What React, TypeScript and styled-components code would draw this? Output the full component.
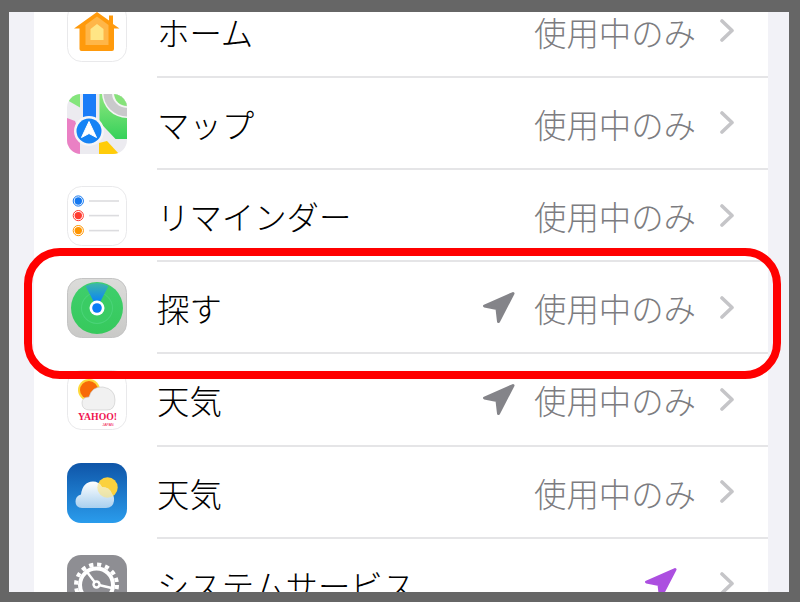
import React from "react";
import styled, { createGlobalStyle } from "styled-components";

const Global = createGlobalStyle`
  html, body { margin: 0; padding: 0; background: #666666; }
  body { font-family: "Noto Sans CJK JP", "Liberation Sans", sans-serif; }
`;

const Frame = styled.div`
  width: 800px;
  height: 602px;
  box-sizing: border-box;
  padding: 12px 11px 10px 9px;
  background: #666666;
`;

const Screen = styled.div`
  position: relative;
  height: 100%;
  overflow: hidden;
  background: #f2f2f7;
  padding: 0 21px 0 25px;
`;

const List = styled.ul`
  list-style: none;
  margin: -26.4px 0 0;
  padding: 0;
  background: #ffffff;
`;

const Row = styled.li`
  display: flex;
  align-items: center;
  height: 92.2px;
  padding-left: 33px;
`;

const AppIcon = styled.svg`
  flex: none;
  width: 60px;
  height: 60px;
  display: block;
`;

const RowBody = styled.div`
  flex: 1;
  align-self: stretch;
  min-width: 0;
  margin-left: 30px;
  padding-right: 33px;
  display: flex;
  align-items: center;
  border-bottom: 2px solid #e5e5e7;
`;

const Label = styled.span`
  flex: 1;
  font-size: 32.4px;
  line-height: 40px;
  font-weight: 300;
  color: #000000;
  white-space: nowrap;
  margin-top: 2px;
`;

const Value = styled.span`
  font-size: 32.4px;
  line-height: 40px;
  font-weight: 300;
  color: #7c7c80;
  white-space: nowrap;
  margin-top: 2px;
`;

const Arrow = styled.svg`
  flex: none;
  width: 34px;
  height: 33px;
  margin-right: 18px;
`;

const Chevron = styled.svg`
  flex: none;
  width: 15px;
  height: 23px;
  margin-left: 24px;
`;

const Highlight = styled.div`
  position: absolute;
  left: 15px;
  top: 236px;
  width: 757px;
  height: 131px;
  box-sizing: border-box;
  border: 8.5px solid #ff0000;
  border-radius: 36px;
  pointer-events: none;
`;

const ARROW_GRAY = "#848489";
const ARROW_PURPLE = "#ac4fe0";

const LocationArrow = ({ color }: { color: string }) => (
  <Arrow viewBox="0 0 34 33">
    <path
      d="M31 2.5 L2.5 15 L15 17.5 L16.5 30.5 Z"
      fill={color}
      stroke={color}
      strokeWidth="3"
      strokeLinejoin="round"
    />
  </Arrow>
);

const RowChevron = () => (
  <Chevron viewBox="0 0 15 23">
    <path d="M2 2 L12 11.5 L2 21" fill="none" stroke="#c5c5c8" strokeWidth="3.6" strokeLinecap="round" strokeLinejoin="round" />
  </Chevron>
);

const HomeIcon = () => (
  <AppIcon viewBox="0 0 60 60">
    <rect x="0.5" y="0.5" width="59" height="59" rx="14" fill="#fff" stroke="#e9e9eb" />
    <path d="M30 10 L42 18.5 V13.5 H46 V22 L52.5 26.5 H47 V47 Q47 49 45 49 H14.5 Q12.5 49 12.5 47 V26.5 H7 Z" fill="#ff9a0c" />
    <path d="M30 14.5 L41.5 23 V43 H18.5 V23 Z" fill="#ffb648" />
    <path d="M30 22 L36.5 27 V38 H23.5 V27 Z" fill="#ffe585" />
  </AppIcon>
);

const MapsIcon = () => (
  <AppIcon viewBox="0 0 60 60">
    <defs>
      <clipPath id="mapClip"><rect width="60" height="60" rx="14" /></clipPath>
      <linearGradient id="mapGreen" x1="0" y1="0" x2="0" y2="1">
        <stop offset="0" stopColor="#8ee67e" />
        <stop offset="1" stopColor="#35d15a" />
      </linearGradient>
    </defs>
    <g clipPath="url(#mapClip)">
      <rect width="60" height="60" fill="#ecebf0" />
      <path d="M0 0 H13 V13.5 L0 6 Z" fill="#84e57c" />
      <path d="M32.5 0 H60 V45 H48.5 L32.5 28 Z" fill="url(#mapGreen)" />
      <circle cx="60" cy="-1" r="25" fill="#f4f4f4" />
      <circle cx="60" cy="-1" r="23.5" fill="#c9c9cb" />
      <circle cx="60" cy="-1" r="15" fill="#f4f4f4" />
      <circle cx="60" cy="-1" r="13" fill="#86e27a" />
      <path d="M0 24 L8 27 L13 40 V60 H0 Z" fill="#ea80c4" />
      <path d="M32 60 L32 49 L40 47 L52 60 Z" fill="#ffcc0a" />
      <rect x="16" y="0" width="13" height="30" fill="#1a7cf8" />
      <circle cx="22" cy="37" r="15" fill="#f5f5f7" />
      <circle cx="22" cy="37" r="12.5" fill="#1583f5" />
      <path d="M22 27.5 L29.5 43.5 L22 39.5 L14.5 43.5 Z" fill="#ffffff" strokeLinejoin="round" stroke="#fff" strokeWidth="1" />
    </g>
  </AppIcon>
);

const ReminderDot = ({ y, color }: { y: number; color: string }) => (
  <>
    <circle cx="11.3" cy={y} r="5.1" fill="none" stroke={color} strokeWidth="1" />
    <circle cx="11.3" cy={y} r="3.7" fill={color} />
    <rect x="22" y={y - 0.8} width="30" height="1.6" fill="#dcdcdf" />
  </>
);

const RemindersIcon = () => (
  <AppIcon viewBox="0 0 60 60">
    <rect x="0.5" y="0.5" width="59" height="59" rx="14" fill="#fff" stroke="#e9e9eb" />
    <ReminderDot y={15} color="#1478f0" />
    <ReminderDot y={29.6} color="#ff3b30" />
    <ReminderDot y={44.6} color="#ff9500" />
  </AppIcon>
);

const FindMyIcon = () => (
  <AppIcon viewBox="0 0 60 60">
    <defs>
      <linearGradient id="fmBg" x1="0" y1="0" x2="0" y2="1">
        <stop offset="0" stopColor="#dcdcda" />
        <stop offset="1" stopColor="#c9c9c7" />
      </linearGradient>
      <linearGradient id="fmGreen" x1="0" y1="0" x2="0" y2="1">
        <stop offset="0" stopColor="#3fcf6c" />
        <stop offset="1" stopColor="#36c95c" />
      </linearGradient>
      <linearGradient id="fmBeam" x1="0" y1="0" x2="0" y2="1">
        <stop offset="0" stopColor="#3fb8a8" />
        <stop offset="0.75" stopColor="#0a84f5" />
      </linearGradient>
    </defs>
    <rect x="0.5" y="0.5" width="59" height="59" rx="14" fill="url(#fmBg)" stroke="#c4c4c4" />
    <circle cx="30" cy="30" r="26" fill="url(#fmGreen)" />
    <circle cx="30" cy="30" r="16" fill="#4bd378" />
    <circle cx="30" cy="30" r="15" fill="#3acc64" />
    <path d="M18.5 8 Q30 2 41.5 8 L30 30 Z" fill="url(#fmBeam)" />
    <circle cx="30" cy="30" r="7.5" fill="#fff" />
    <circle cx="30" cy="30" r="4.8" fill="#0a7cf5" />
  </AppIcon>
);

const YahooIcon = () => (
  <AppIcon viewBox="0 0 60 60">
    <rect x="0.5" y="0.5" width="59" height="59" rx="14" fill="#fff" stroke="#e9e9eb" />
    <circle cx="22" cy="20" r="11" fill="#ffd83a" />
    <circle cx="22" cy="20" r="9" fill="#f86a06" />
    <path d="M23 40 Q15 40 15 33 Q15 27 22 27 Q25 16 36 17 Q48 19 48 30 Q48 40 40 40 Z" fill="#f1f1f1" stroke="#c8c8c8" strokeWidth="0.6" />
    <text x="30.5" y="50" textAnchor="middle" fontFamily="'Liberation Serif', serif" fontWeight="700" fontSize="9.5" textLength="39" lengthAdjust="spacingAndGlyphs" fill="#f0134f">YAHOO!</text>
    <text x="41" y="55.5" textAnchor="middle" fontFamily="'Liberation Sans', sans-serif" fontSize="3.6" fill="#f0134f">JAPAN</text>
  </AppIcon>
);

const WEATHER_CLOUD =
  "M15 45 Q8.5 45 8.5 38.5 Q8.5 33 14 31.5 Q15.5 19 26 18.5 Q32 18.5 35 24 Q43 24 45 31 Q47.5 33 47 38 Q46 45 39 45 Z";

const WeatherIcon = () => (
  <AppIcon viewBox="0 0 60 60">
    <defs>
      <linearGradient id="wBg" x1="0" y1="0" x2="0" y2="1">
        <stop offset="0" stopColor="#0f55a8" />
        <stop offset="1" stopColor="#2a9cec" />
      </linearGradient>
      <linearGradient id="wCloud" x1="0" y1="0" x2="0" y2="1">
        <stop offset="0" stopColor="#ffffff" />
        <stop offset="1" stopColor="#a9d0ef" />
      </linearGradient>
      <clipPath id="wCloudClip"><path d={WEATHER_CLOUD} /></clipPath>
    </defs>
    <rect width="60" height="60" rx="14" fill="url(#wBg)" />
    <circle cx="40.5" cy="24.5" r="10.2" fill="#fbd13e" />
    <path d={WEATHER_CLOUD} fill="url(#wCloud)" />
    <circle cx="40.5" cy="24.5" r="10.2" fill="#fbe37a" opacity="0.6" clipPath="url(#wCloudClip)" />
  </AppIcon>
);

const SystemIcon = () => (
  <AppIcon viewBox="0 0 60 60">
    <rect width="60" height="60" rx="14" fill="#8e8e93" />
    <circle cx="29.5" cy="30" r="20.5" fill="none" stroke="#fff" strokeWidth="4" strokeDasharray="4.2 3.85" />
    <circle cx="29.5" cy="30" r="16.5" fill="none" stroke="#fff" strokeWidth="4" />
    <path d="M29.5 29.5 L18.5 15 M29.5 29.5 L47 33.5" fill="none" stroke="#fff" strokeWidth="2.4" />
    <circle cx="29.5" cy="29.5" r="4.2" fill="#fff" />
    <circle cx="29.5" cy="29.5" r="1.7" fill="#8e8e93" />
  </AppIcon>
);

type Item = {
  icon: React.ReactNode;
  label: string;
  value?: string;
  arrow?: string;
};

const items: Item[] = [
  { icon: <HomeIcon />, label: "ホーム", value: "使用中のみ" },
  { icon: <MapsIcon />, label: "マップ", value: "使用中のみ" },
  { icon: <RemindersIcon />, label: "リマインダー", value: "使用中のみ" },
  { icon: <FindMyIcon />, label: "探す", value: "使用中のみ", arrow: ARROW_GRAY },
  { icon: <YahooIcon />, label: "天気", value: "使用中のみ", arrow: ARROW_GRAY },
  { icon: <WeatherIcon />, label: "天気", value: "使用中のみ" },
  { icon: <SystemIcon />, label: "システムサービス", arrow: ARROW_PURPLE },
];

export default function App() {
  return (
    <Frame>
      <Global />
      <Screen>
        <List>
          {items.map((item, i) => (
            <Row key={i}>
              {item.icon}
              <RowBody>
                <Label>{item.label}</Label>
                {item.arrow && <LocationArrow color={item.arrow} />}
                {item.value && <Value>{item.value}</Value>}
                <RowChevron />
              </RowBody>
            </Row>
          ))}
        </List>
        <Highlight />
      </Screen>
    </Frame>
  );
}
